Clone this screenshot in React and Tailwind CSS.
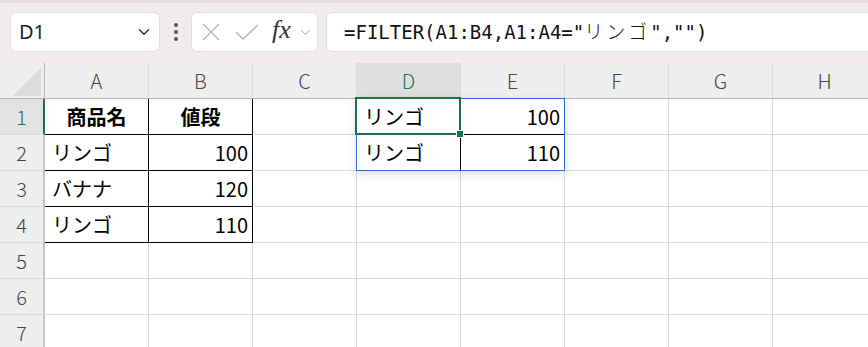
import { ChevronDown } from "lucide-react";

const cols = ["A", "B", "C", "D", "E", "F", "G", "H"];

// cell contents keyed by "row-col"
const data = {
  "1-A": { v: "商品名", bold: true, align: "center" },
  "1-B": { v: "値段", bold: true, align: "center" },
  "2-A": { v: "リンゴ" },
  "2-B": { v: "100", align: "right" },
  "3-A": { v: "バナナ" },
  "3-B": { v: "120", align: "right" },
  "4-A": { v: "リンゴ" },
  "4-B": { v: "110", align: "right" },
  "1-D": { v: "リンゴ" },
  "1-E": { v: "100", align: "right" },
  "2-D": { v: "リンゴ" },
  "2-E": { v: "110", align: "right" },
};

function cellBorders(r, c) {
  const inTable = r <= 4 && (c === "A" || c === "B");
  const right =
    inTable || (r === 2 && c === "D") ? "border-r-black" : "border-r-[#dadada]";
  const bottom =
    inTable || (r === 1 && c === "E") ? "border-b-black" : "border-b-[#dadada]";
  return `${right} ${bottom}`;
}

function Cell({ r, c }) {
  const d = data[`${r}-${c}`];
  const align =
    d?.align === "center"
      ? "justify-center"
      : d?.align === "right"
      ? "justify-end pr-[4px]"
      : "justify-start pl-[7px]";
  return (
    <div
      className={`h-[36px] border-r border-b flex items-center ${cellBorders(r, c)} ${align} text-[20px] text-black ${
        d?.bold ? "font-bold" : ""
      }`}
    >
      {d?.v}
    </div>
  );
}

function FormulaBar() {
  return (
    <div className="h-[63px] bg-[#f1eded] border-t-[3px] border-[#e6e1e1] flex items-start pt-[9px] pl-[10px]">
      <div className="shrink-0 w-[150px] h-[40px] bg-white rounded-[6px] border border-[#e2dede] flex items-center pl-[8px] pr-[6px]">
        <span className="flex-1 text-[20px] text-[#222] font-['Noto_Sans',sans-serif] leading-none">D1</span>
        <ChevronDown size={18} strokeWidth={2} className="text-[#333]" />
      </div>
      <div className="shrink-0 w-[31px] h-[40px] flex flex-col items-center justify-center gap-[3px]">
        <span className="w-[4px] h-[4px] rounded-full bg-[#555]" />
        <span className="w-[4px] h-[4px] rounded-full bg-[#555]" />
        <span className="w-[4px] h-[4px] rounded-full bg-[#555]" />
      </div>
      <div className="shrink-0 w-[127px] h-[40px] bg-white rounded-[6px] border border-[#e2dede] flex items-center pl-[9px]">
        <svg width="20" height="20" viewBox="0 0 20 20" className="text-[#b4b4b4]">
          <path d="M2 2 L18 18 M18 2 L2 18" stroke="currentColor" strokeWidth="1.4" fill="none" />
        </svg>
        <svg width="26" height="20" viewBox="0 0 26 20" className="ml-[13px] text-[#b4b4b4]">
          <path d="M2 10 L9 17 L24 3" stroke="currentColor" strokeWidth="1.4" fill="none" />
        </svg>
        <span className="ml-[12px] text-[26px] italic text-[#333] font-['Liberation_Serif',serif] leading-none -mt-[4px]">
          fx
        </span>
        <ChevronDown size={15} strokeWidth={1.5} className="ml-[7px] text-[#9a9a9a]" />
      </div>
      <div className="shrink-0 ml-[8px] w-[560px] h-[40px] bg-white rounded-[6px] border border-[#e2dede] flex items-center pl-[17px]">
        <span className="text-[19px] text-[#111] font-['DejaVu_Sans_Mono','Noto_Sans_CJK_JP',monospace] whitespace-pre">
          =FILTER(A1:B4,A1:A4="
          <span className="tracking-[3px] font-light">リンゴ</span>
          ","")
        </span>
      </div>
    </div>
  );
}

function Grid() {
  return (
    <div className="relative grid grid-cols-[45px_repeat(8,104px)] font-['Noto_Sans_CJK_JP',sans-serif]">
      {/* corner */}
      <div className="relative h-[36px] bg-[#efefef] border-r border-b border-[#b4b4b4]">
        <svg width="44" height="36" className="absolute inset-0">
          <polygon points="13,33 41,5 41,33" fill="#dcdcdc" />
        </svg>
      </div>
      {cols.map((c) => (
        <div
          key={c}
          className={`h-[36px] border-b border-b-[#b4b4b4] border-r border-r-[#dadada] flex items-center justify-center text-[20px] font-light ${
            c === "D" ? "bg-[#dfdfdf] text-[#1e7145]" : "bg-[#efefef] text-[#444]"
          }`}
        >
          {c}
        </div>
      ))}
      {[1, 2, 3, 4, 5, 6, 7].map((r) => (
        <div key={r} className="contents">
          <div
            className={`h-[36px] border-b border-b-[#dadada] border-r-[2px] flex items-center justify-center text-[20px] font-light ${
              r === 1
                ? "bg-[#e3e3e3] text-[#1e7145] border-r-[#1e7145]"
                : "bg-[#efefef] text-[#444] border-r-[#c4c4c4]"
            }`}
          >
            {r}
          </div>
          {cols.map((c) => (
            <Cell key={c} r={r} c={c} />
          ))}
        </div>
      ))}

      {/* spill range outline D1:E2 */}
      <div className="absolute left-[356px] top-[35px] w-[209px] h-[73px] border border-[#2b6fd6] shadow-[0_3px_10px_rgba(0,0,0,0.12)] pointer-events-none" />
      {/* active cell D1 */}
      <div className="absolute left-[355px] top-[34px] w-[106px] h-[38px] border-[2px] border-[#1e7145] pointer-events-none" />
      <div className="absolute left-[456px] top-[67px] w-[6px] h-[6px] bg-[#1e7145] border border-white box-content pointer-events-none" />
    </div>
  );
}

export default function App() {
  return (
    <div className="w-[868px] h-[347px] overflow-hidden bg-white">
      <FormulaBar />
      <Grid />
    </div>
  );
}
